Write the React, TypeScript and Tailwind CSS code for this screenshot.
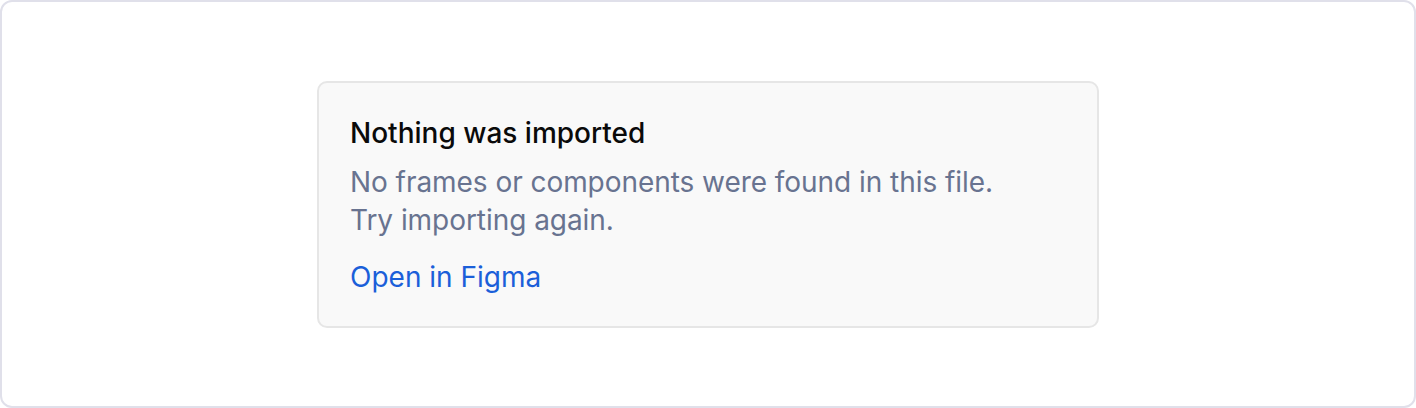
export default function App() {
  return (
    <div className="flex h-[408px] w-[1416px] items-center justify-center rounded-[12px] border-2 border-[#e0e0ea] bg-white font-['Inter',sans-serif]">
      <div className="w-[782px] rounded-[10px] border-2 border-[#e6e6e6] bg-[#f9f9f9] px-[31px] pt-[31px] pb-[30px]">
        <h2 className="text-[28px] leading-[38px] font-medium text-[#0a0a0a]">Nothing was imported</h2>
        <p className="mt-[11px] text-[28px] leading-[38px] tracking-[-0.05px] text-[#687390]">
          No frames or components were found in this file.
          <br />
          Try importing again.
        </p>
        <a href="#" className="mt-[19px] block text-[28px] leading-[38px] text-[#1b5fd9]">
          Open in Figma
        </a>
      </div>
    </div>
  );
}
